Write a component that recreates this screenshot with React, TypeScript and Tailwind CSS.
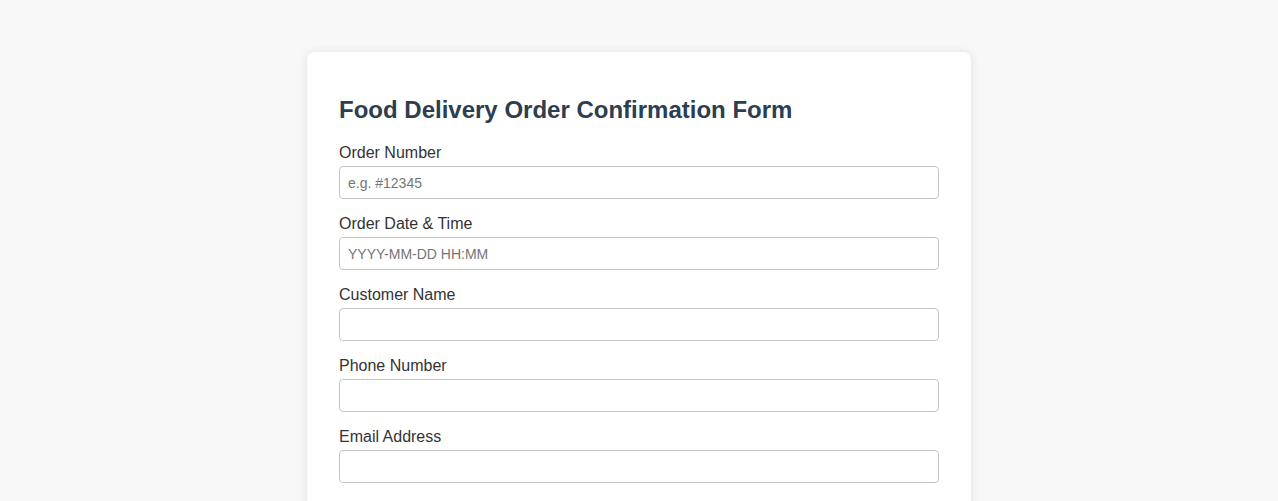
import React from "react";

const fields = [
  { label: "Order Number", placeholder: "e.g. #12345", type: "text" },
  { label: "Order Date & Time", placeholder: "YYYY-MM-DD HH:MM", type: "text" },
  { label: "Customer Name", placeholder: "", type: "text" },
  { label: "Phone Number", placeholder: "", type: "tel" },
  { label: "Email Address", placeholder: "", type: "email" },
];

const App = () => {
  return (
    <div
      className="min-h-screen bg-[#f8f8f8] pt-[52px] pb-10"
      style={{ fontFamily: '"Liberation Sans", Arial, sans-serif' }}
    >
      <div className="mx-auto w-[664px] bg-white rounded-[8px] shadow-[0_0_10px_rgba(0,0,0,0.1)] px-8 pt-8 pb-8">
        <h2 className="mt-[12px] mb-[20px] text-[24px] leading-[28px] font-bold text-[#2c3e50]">
          Food Delivery Order Confirmation Form
        </h2>
        <form>
          {fields.map((f, i) => (
            <div key={i} className="mb-[16px]">
              <label className="block mb-[4px] text-[16px] leading-[18px] text-[#333]">
                {f.label}
              </label>
              <input
                type={f.type}
                placeholder={f.placeholder}
                className="block w-full h-[33px] px-2 border border-[#c4c4c4] rounded-[4px] text-[14px] text-[#333] placeholder:text-[#757575] bg-white"
              />
            </div>
          ))}
        </form>
      </div>
    </div>
  );
};

export default App;
